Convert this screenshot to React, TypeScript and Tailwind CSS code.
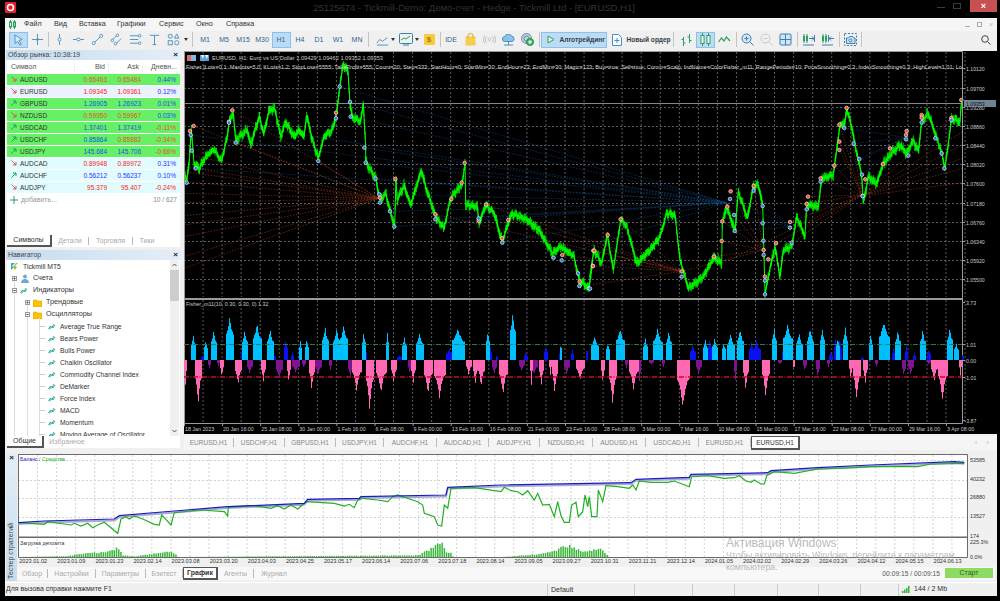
import type { ReactNode } from "react";

type Pt = [number, number];

// the zoomed crops were read at 3x, these bring their numbers back to page pixels
const L = (x: number, y: number): Pt => [184 + x / 3, 50 + y / 3];
const R = (x: number, y: number): Pt => [590 + x / 3, 50 + y / 3];
const TL = (x: number, y: number): Pt => [x / 3, 445 + y / 3];
const TR = (x: number, y: number): Pt => [500 + x / 3, 445 + y / 3];

const noise = (i: number) => {
  const v = Math.sin(i * 12.9898) * 43758.5453;
  return v - Math.floor(v);
};

const pts = (list: Pt[]) => list.map((p) => `${p[0].toFixed(1)},${p[1].toFixed(1)}`).join(" ");

const MAIN_LEFT: number[][] = [
  [0, 360], [8, 395], [15, 340], [22, 240], [30, 340], [45, 355], [65, 320], [90, 300], [112, 335], [130, 260], [135, 215],
  [148, 190], [155, 270], [190, 240], [200, 285], [225, 200], [240, 250], [255, 180], [272, 175], [290, 260], [305, 215],
  [330, 260], [345, 240], [360, 260], [368, 195], [385, 270], [403, 325], [420, 260], [445, 240], [458, 190], [467, 110],
  [478, 40], [492, 65], [498, 160], [505, 200], [530, 215], [538, 160], [545, 290], [545, 335], [575, 385], [588, 450],
  [605, 430], [620, 490], [632, 525], [636, 390], [640, 450], [660, 405], [680, 465], [712, 360], [725, 410], [755, 500],
  [780, 535], [800, 445], [835, 400], [843, 340], [845, 465], [880, 470], [885, 520], [905, 465], [930, 490], [955, 575],
  [975, 510], [985, 490], [1030, 510], [1065, 540], [1105, 610], [1130, 590], [1170, 620], [1185, 690], [1215, 715], [1225, 640],
];
const MAIN_RIGHT: number[][] = [
  [0, 680], [12, 600], [35, 640], [52, 555], [70, 660], [92, 510], [110, 530], [140, 640], [180, 600], [210, 560], [230, 490],
  [255, 495], [270, 630], [295, 715], [340, 680], [372, 620], [395, 640], [397, 520], [410, 470], [435, 540], [445, 425],
  [472, 505], [490, 410], [505, 405], [518, 465], [525, 730], [540, 655], [555, 590], [570, 680], [580, 600], [605, 590],
  [620, 500], [645, 560], [650, 465], [685, 470], [695, 385], [730, 375], [750, 225], [765, 220], [770, 175], [785, 230],
  [795, 285], [815, 375], [820, 460], [835, 380], [860, 400], [880, 340], [905, 310], [930, 285], [950, 310], [970, 270],
  [985, 305], [995, 215], [1015, 190], [1040, 265], [1055, 310], [1065, 355], [1085, 205], [1110, 215], [1115, 150],
];
const PRICE: Pt[] = [...MAIN_LEFT.map((p) => L(p[0], p[1])), ...MAIN_RIGHT.map((p) => R(p[0], p[1]))];

const candlePath = (() => {
  let d = "";
  let n = 0;
  for (let i = 1; i < PRICE.length; i++) {
    const [x0, y0] = PRICE[i - 1];
    const [x1, y1] = PRICE[i];
    const steps = Math.max(1, Math.round((x1 - x0) * 2));
    for (let s = 0; s < steps; s++) {
      const t = s / steps;
      const x = x0 + (x1 - x0) * t;
      const y = y0 + (y1 - y0) * t + (noise(n++) - 0.5) * 3.5 + Math.sin(x * 1.3) * 1.2;
      d += `M${x.toFixed(1)} ${(y - 2 - noise(n) * 2.5).toFixed(1)}V${(y + 2 + noise(n + 7) * 2.5).toFixed(1)}`;
    }
  }
  return d;
})();

const RED_MARKS: Pt[] = [
  ...[[18, 243], [29, 228], [135, 215], [145, 181], [456, 188], [588, 443], [634, 387], [754, 493], [802, 447], [833, 398], [842, 339], [906, 464], [884, 512], [954, 565], [973, 510], [1135, 615], [1187, 695], [1228, 602], [1226, 648]].map((p) => L(p[0], p[1])),
  ...[[9, 648], [13, 602], [53, 555], [92, 508], [275, 664], [372, 620], [395, 573], [397, 514], [412, 470], [422, 424], [491, 408], [521, 600], [525, 680], [535, 628], [558, 580], [600, 516], [650, 462], [654, 440], [692, 385], [733, 347], [748, 224], [748, 275], [748, 300], [770, 174], [818, 438], [826, 388], [879, 342], [900, 295], [948, 255], [950, 243], [995, 195], [995, 203], [1084, 204], [1114, 150]].map((p) => R(p[0], p[1])),
];
const BLUE_MARKS: Pt[] = [
  ...[[8, 398], [20, 255], [23, 302], [35, 355], [135, 218], [155, 278], [403, 333], [456, 205], [467, 110], [498, 156], [500, 200], [541, 293], [545, 338], [575, 386], [586, 433], [588, 458], [618, 484], [631, 530], [754, 508], [884, 505], [955, 578], [1109, 623], [1133, 631], [1182, 670], [1186, 708], [1215, 715]].map((p) => L(p[0], p[1])),
  ...[[0, 716], [275, 680], [420, 447], [432, 495], [434, 543], [491, 422], [518, 468], [518, 520], [520, 572], [521, 615], [525, 692], [525, 733], [600, 533], [605, 578], [650, 478], [692, 395], [763, 234], [791, 281], [808, 327], [816, 374], [818, 438], [948, 268], [955, 317], [995, 217], [1036, 265], [1055, 310], [1063, 355], [1084, 210]].map((p) => R(p[0], p[1])),
];

// dotted order lines, fanned out from a handful of points
const fan = (to: Pt, from: Pt[]) => from.map((f) => [f, to] as [Pt, Pt]);
const RED_LINES = [
  ...fan(L(585, 445), [310, 350, 365, 395, 430, 458, 497, 525, 560, 620, 655].map((y) => L(0, y))),
  ...fan(L(585, 445), [L(145, 181), L(29, 228), L(155, 278), L(403, 333)]),
  ...fan(R(275, 664), [L(754, 493), L(906, 464), L(973, 510), L(1135, 615), R(13, 602), R(53, 555), R(92, 508), R(9, 648), R(0, 705)]),
  ...fan(R(520, 600), [R(275, 664), R(372, 620), R(395, 573), R(397, 514), R(412, 470), R(422, 424), R(491, 408)]),
  ...fan(R(815, 435), [R(733, 347), R(748, 224), R(748, 275), R(748, 300), R(770, 174), R(692, 385), R(654, 440), R(650, 462), R(600, 516), R(558, 580), R(535, 628), R(397, 640)]),
  ...fan(R(818, 438), [R(1117, 245), R(1117, 285), R(1117, 325), R(1117, 355), R(1117, 398), R(1084, 204)]),
];
const BLUE_LINES = [
  ...fan(R(410, 458), [L(467, 110), L(498, 156), L(500, 200), L(541, 293), L(545, 338), L(575, 386), L(135, 218), L(35, 355), L(586, 433), L(631, 530), L(754, 508), L(955, 578), L(1109, 623), L(618, 484), L(884, 505), L(20, 255)]),
  ...fan(R(600, 530), [R(432, 495), R(434, 543), R(518, 468), R(491, 422), R(420, 447)]),
  ...fan(R(945, 262), [R(763, 234), R(791, 281), R(808, 327), R(816, 374), R(692, 395)]),
];

// [x0, x1, top] in crop pixels, zero line of the pane is 195 in the crop
type Spike = [number, number, number];
const FISHER_Y = (y: number) => 295 + y / 3;
const CYAN_L: Spike[] = [[20, 32, 115], [60, 68, 130], [80, 97, 103], [125, 148, 58], [175, 190, 100], [207, 230, 82], [250, 266, 98], [345, 352, 130], [362, 372, 128], [415, 432, 92], [447, 468, 97], [468, 488, 87], [535, 542, 103], [605, 612, 105], [655, 665, 122], [697, 718, 110], [803, 840, 97], [905, 915, 97], [978, 992, 45], [1128, 1131, 130]];
const BLUE_L: Spike[] = [[52, 60, 180], [170, 175, 150], [28, 34, 150], [225, 230, 150], [265, 272, 175], [300, 308, 125], [320, 328, 170], [535, 545, 150], [640, 655, 180], [785, 803, 160], [915, 922, 155], [935, 940, 175], [1020, 1030, 170], [1080, 1088, 148], [1125, 1132, 160], [1160, 1167, 160], [1205, 1210, 145], [1222, 1230, 130]];
const PINK_L: Spike[] = [[0, 5, 280], [32, 50, 335], [108, 116, 255], [152, 170, 275], [232, 243, 270], [310, 318, 275], [375, 390, 292], [505, 530, 290], [545, 568, 350], [575, 605, 295], [620, 635, 270], [680, 692, 275], [720, 745, 305], [750, 782, 312], [845, 860, 245], [868, 878, 278], [882, 900, 280], [945, 968, 305], [1038, 1045, 280], [1065, 1077, 280], [1095, 1100, 250], [1105, 1120, 305], [1175, 1200, 258]];
const PURPLE_L: Spike[] = [[72, 78, 225], [98, 105, 215], [190, 205, 238], [275, 295, 255], [325, 345, 235], [355, 362, 220], [392, 410, 240], [435, 442, 230], [492, 505, 250], [672, 680, 240], [925, 935, 240], [1005, 1020, 230], [1040, 1060, 240], [1140, 1155, 240]];
const CYAN_R: Spike[] = [[3, 25, 120], [48, 56, 140], [78, 102, 95], [158, 172, 125], [190, 215, 100], [228, 243, 105], [338, 350, 130], [365, 380, 127], [395, 405, 138], [410, 432, 115], [442, 458, 97], [545, 558, 90], [578, 605, 85], [618, 635, 110], [650, 668, 95], [690, 703, 92], [738, 748, 122], [760, 772, 90], [838, 846, 108], [868, 898, 75], [915, 930, 100], [990, 1005, 100], [1072, 1087, 92], [1093, 1103, 140]];
const BLUE_R: Spike[] = [[300, 315, 148], [350, 365, 130], [478, 492, 138], [490, 510, 135], [575, 582, 150], [718, 725, 168], [733, 738, 125], [745, 752, 125], [812, 818, 185], [905, 912, 155], [945, 952, 148], [970, 975, 172], [1012, 1020, 160], [1115, 1118, 170]];
const PINK_R: Spike[] = [[33, 43, 275], [58, 77, 335], [118, 143, 285], [260, 298, 342], [460, 475, 290], [515, 537, 308], [608, 612, 250], [778, 785, 260], [790, 810, 320], [818, 830, 272], [1023, 1040, 265], [1045, 1070, 320], [1108, 1112, 250]];
const PURPLE_R: Spike[] = [[105, 110, 222], [143, 150, 270], [178, 188, 210], [215, 222, 218], [318, 333, 238], [433, 438, 265], [565, 572, 210], [638, 648, 230], [678, 686, 250], [712, 716, 218], [855, 860, 218], [935, 945, 248], [955, 970, 240], [1010, 1020, 210]];

// one spike as a row of whole-pixel bars, with a jagged profile like the histogram
const spikeBars = (list: Spike[], ox: number, base: number) => {
  const zero = FISHER_Y(195);
  let d = "";
  for (const s of list) {
    const x0 = Math.round(ox + s[0] / 3);
    const x1 = Math.max(x0, Math.round(ox + s[1] / 3));
    const top = FISHER_Y(s[2]);
    for (let x = x0; x <= x1; x++) {
      const t = (x - x0) / Math.max(1, x1 - x0);
      const peak = 1 - Math.abs(t - 0.45) / 0.55;
      const k = (base + (1 - base) * peak * peak) * (0.92 + 0.08 * noise(x * 3));
      d += `M${x + 0.5} ${zero}V${(zero + (top - zero) * k).toFixed(1)}`;
    }
  }
  return d;
};

const BALANCE: Pt[] = [
  ...[[52, 233], [130, 228], [340, 222], [355, 212], [520, 198], [680, 185], [910, 175], [920, 163], [1075, 160], [1080, 155], [1335, 150], [1340, 127], [1500, 120]].map((p) => TL(p[0], p[1])),
  ...[[0, 120], [390, 113], [405, 103], [565, 97], [570, 88], [800, 83], [810, 77], [950, 68], [1110, 60], [1360, 50], [1390, 52]].map((p) => TR(p[0], p[1])),
];
const EQUITY: Pt[] = [
  ...[[52, 233], [130, 238], [140, 230], [210, 240], [220, 235], [240, 243], [260, 235], [275, 248], [290, 240], [310, 232], [350, 265], [360, 222], [375, 215], [385, 222], [400, 213], [425, 222], [460, 238], [475, 240], [482, 210], [490, 218], [510, 240], [520, 203], [600, 195], [670, 200], [680, 213], [682, 187], [760, 182], [810, 190], [830, 182], [850, 192], [870, 180], [890, 192], [915, 170], [1000, 175], [1030, 183], [1045, 178], [1060, 188], [1070, 165], [1085, 160], [1130, 165], [1160, 170], [1175, 155], [1190, 150], [1250, 170], [1265, 180], [1270, 205], [1300, 215], [1310, 240], [1322, 243], [1330, 180], [1340, 190], [1350, 130], [1420, 128], [1500, 140]].map((p) => TL(p[0], p[1])),
  ...[[0, 140], [10, 127], [30, 137], [50, 140], [65, 150], [80, 137], [100, 165], [110, 145], [125, 180], [145, 178], [160, 215], [170, 170], [180, 212], [190, 232], [205, 232], [212, 180], [225, 172], [232, 215], [245, 200], [252, 150], [260, 185], [265, 155], [272, 215], [288, 215], [292, 135], [305, 170], [315, 122], [350, 125], [385, 130], [395, 120], [405, 135], [415, 108], [450, 112], [500, 112], [520, 108], [565, 125], [572, 95], [620, 92], [670, 100], [700, 98], [715, 92], [735, 108], [750, 112], [760, 105], [780, 117], [790, 117], [797, 92], [820, 80], [880, 85], [950, 72], [1060, 68], [1110, 65], [1250, 65], [1290, 57], [1390, 55]].map((p) => TR(p[0], p[1])),
];

const LOAD_ENV: Pt[] = [
  ...[[50, 336], [200, 333], [230, 326], [280, 322], [320, 317], [355, 303], [360, 330], [400, 334], [450, 325], [510, 316], [525, 330], [530, 336], [1000, 332], [1250, 330], [1270, 318], [1290, 305], [1305, 287], [1322, 286], [1330, 318], [1350, 322], [1355, 336], [1500, 336]].map((p) => TL(p[0], p[1])),
  ...[[0, 336], [100, 327], [150, 318], [190, 298], [205, 298], [240, 315], [300, 310], [315, 325], [320, 336], [1390, 336]].map((p) => TR(p[0], p[1])),
];
const loadBars = (() => {
  const out: { x: number; y: number }[] = [];
  for (let x = 18; x < 963; x += 2.2) {
    const k = LOAD_ENV.findIndex((p) => p[0] > x);
    if (k < 1) continue;
    const a = LOAD_ENV[k - 1];
    const b = LOAD_ENV[k];
    const y = a[1] + ((b[1] - a[1]) * (x - a[0])) / (b[0] - a[0]);
    out.push({ x, y: y + noise(x) * (557 - y) * 0.3 });
  }
  return out;
})();

const PRICE_LABELS: [string, number][] = [
  ["1.10120", 68], ["1.09700", 88], ["1.09280", 107], ["1.08860", 126], ["1.08440", 145], ["1.08020", 164],
  ["1.07600", 183], ["1.07180", 203], ["1.06760", 222], ["1.06340", 241], ["1.05920", 260], ["1.05500", 279],
];
const TIME_LABELS = ["18 Jan 2023", "20 Jan 16:00", "25 Jan 08:00", "30 Jan 00:00", "1 Feb 16:00", "6 Feb 08:00", "9 Feb 00:00", "13 Feb 16:00", "16 Feb 08:00", "21 Feb 00:00", "23 Feb 16:00", "28 Feb 08:00", "3 Mar 00:00", "7 Mar 16:00", "10 Mar 08:00", "15 Mar 00:00", "17 Mar 16:00", "22 Mar 08:00", "27 Mar 00:00", "29 Mar 16:00", "3 Apr 08:00"];
const TEST_DATES = ["2023.01.02", "2023.01.09", "2023.01.23", "2023.02.14", "2023.03.08", "2023.03.20", "2023.04.03", "2023.04.25", "2023.05.17", "2023.06.14", "2023.07.06", "2023.07.18", "2023.08.14", "2023.09.05", "2023.09.27", "2023.10.31", "2023.11.21", "2023.12.14", "2024.01.05", "2024.02.02", "2024.02.29", "2024.03.26", "2024.04.12", "2024.05.15", "2024.06.13"];

const FISHER_PARAMS = "Fisher [Lots=0.1; Maxlots=5.0; KLots=1.2; StopLoss=5555; TakeProfit=555; Count=20; Step=333; StartHour=0; StartMin=30; EndHour=23; EndMin=30; Magic=123; Buy=true; Sell=true; Comm=Scalp; IndName=ColorFisher_m11; RangePeriods=10; PriceSmoothing=0.3; IndexSmoothing=0.3; HighLevel=1.01; Lo";

const SYMBOLS = [
  { name: "AUDUSD", up: false, bid: "0.65463", ask: "0.65484", day: "0.44%", row: "bg-[#66f066]", bc: "text-[#e8501c]", ac: "text-[#e8501c]", dc: "text-[#1c50e8]" },
  { name: "EURUSD", up: false, bid: "1.09345", ask: "1.09361", day: "0.12%", row: "bg-[#eaf1ff]", bc: "text-[#ff2020]", ac: "text-[#ff2020]", dc: "text-[#3030ff]" },
  { name: "GBPUSD", up: true, bid: "1.26905", ask: "1.26923", day: "0.01%", row: "bg-[#66f066]", bc: "text-[#1c50e8]", ac: "text-[#1c50e8]", dc: "text-[#1c50e8]" },
  { name: "NZDUSD", up: false, bid: "0.59950", ask: "0.59967", day: "0.03%", row: "bg-[#66f066]", bc: "text-[#e8501c]", ac: "text-[#e8501c]", dc: "text-[#1c50e8]" },
  { name: "USDCAD", up: true, bid: "1.37401", ask: "1.37419", day: "-0.11%", row: "bg-[#66f066]", bc: "text-[#1c50e8]", ac: "text-[#1c50e8]", dc: "text-[#e8501c]" },
  { name: "USDCHF", up: true, bid: "0.85864", ask: "0.85882", day: "-0.34%", row: "bg-[#66f066]", bc: "text-[#1c50e8]", ac: "text-[#e8501c]", dc: "text-[#e8501c]" },
  { name: "USDJPY", up: true, bid: "145.684", ask: "145.706", day: "-0.68%", row: "bg-[#66f066]", bc: "text-[#1c50e8]", ac: "text-[#1c50e8]", dc: "text-[#e8501c]" },
  { name: "AUDCAD", up: false, bid: "0.89948", ask: "0.89972", day: "0.31%", row: "bg-[#e0fcff]", bc: "text-[#ff2020]", ac: "text-[#ff2020]", dc: "text-[#3030ff]" },
  { name: "AUDCHF", up: true, bid: "0.56212", ask: "0.56237", day: "0.10%", row: "bg-[#e0fcff]", bc: "text-[#3030ff]", ac: "text-[#3030ff]", dc: "text-[#3030ff]" },
  { name: "AUDJPY", up: false, bid: "95.379", ask: "95.407", day: "-0.24%", row: "bg-[#e0fcff]", bc: "text-[#ff2020]", ac: "text-[#ff2020]", dc: "text-[#ff2020]" },
];

const INDICATORS = ["Average True Range", "Bears Power", "Bulls Power", "Chaikin Oscillator", "Commodity Channel Index", "DeMarker", "Force Index", "MACD", "Momentum", "Moving Average of Oscillator"];

const CHART_TABS: [string, string][] = [
  ["EURUSD,H1", "w-[50px]"], ["USDCHF,H1", "w-[51px]"], ["GBPUSD,H1", "w-[51px]"], ["USDJPY,H1", "w-[48px]"],
  ["AUDCHF,H1", "w-[53px]"], ["AUDCAD,H1", "w-[52px]"], ["AUDJPY,H1", "w-[51px]"], ["NZDUSD,H1", "w-[53px]"],
  ["AUDUSD,H1", "w-[53px]"], ["USDCAD,H1", "w-[53px]"], ["EURUSD,H1", "w-[52px]"],
];

const TESTER_TABS: [string, string][] = [
  ["Обзор", "w-[31px]"], ["Настройки", "w-[48px]"], ["Параметры", "w-[50px]"], ["Бэктест", "w-[37px]"],
];

const STATUS_WIDTHS = ["w-[58px]", "w-[42px]", "w-[43px]", "w-[41px]", "w-[42px]", "w-[38px]"];

function Ico({ children, w = 13 }: { children: ReactNode; w?: number }) {
  return (
    <svg width={w} height={w} viewBox="0 0 14 14" fill="none" strokeWidth="1" className="text-[#4a90c0] stroke-current">
      {children}
    </svg>
  );
}

function Cell({ children, active = false }: { children: ReactNode; active?: boolean }) {
  return (
    <div className={`w-[19px] h-[16px] shrink-0 flex items-center justify-center text-[#33658a] text-[7px] ${active ? "bg-[#bcdcf5] border border-[#8dc0ea]" : ""}`}>
      {children}
    </div>
  );
}

const Sep = () => (
  <div className="w-[3px] h-[15px] shrink-0 flex justify-center">
    <div className="w-px h-full bg-[#c4c4c4]" />
  </div>
);

const Caret = () => <div className="w-0 h-0 border-x-[2.5px] border-x-transparent border-t-[3px] border-t-[#333] mx-[1px]" />;

function Toolbar() {
  return (
    <div className="h-[18px] flex items-center pl-[3.5px] relative">
      <Cell active>
        <Ico><path d="M3 2l8 5-3.5 1 2.5 4-1.5 1-2.5-4-2.5 2.5z" fill="#d8ecfb" /></Ico>
      </Cell>
      <Cell>
        <Ico><path d="M7 1v12M1 7h12" /><circle cx="7" cy="7" r="1" fill="currentColor" /></Ico>
      </Cell>
      <Sep />
      <Cell>
        <Ico><path d="M7 1v12" /><ellipse cx="7" cy="7" rx="1.5" ry="2" fill="#fff" /></Ico>
      </Cell>
      <Cell>
        <Ico><path d="M1 7h12" /><ellipse cx="7" cy="7" rx="2" ry="1.5" fill="#fff" /></Ico>
      </Cell>
      <Cell>
        <Ico><path d="M3 11L11 3" /><circle cx="3" cy="11" r="1.6" fill="#fff" /><circle cx="11" cy="3" r="1.6" fill="#fff" /></Ico>
      </Cell>
      <Cell>
        <Ico><path d="M2 8L8 2M6 12l6-6" /><circle cx="2.5" cy="8" r="1.4" fill="#fff" /><circle cx="8" cy="2.5" r="1.4" fill="#fff" /><circle cx="6" cy="11.5" r="1.4" fill="#fff" /></Ico>
      </Cell>
      <Cell>
        <Ico><path d="M1 3h9M1 7h9M1 11h9" /><circle cx="11.5" cy="3" r="1.4" fill="#fff" /><circle cx="11.5" cy="11" r="1.4" fill="#fff" /></Ico>
      </Cell>
      <Cell>
        <Ico><path d="M2 2.5h10M7 2.5V12.5M5 12.5h4" /></Ico>
      </Cell>
      <Cell>
        <Ico><circle cx="3.5" cy="3.5" r="2.2" /><path d="M10.5 1l2.4 4.5H8z" /><rect x="1.3" y="8.3" width="4.4" height="4.4" /><rect x="8.3" y="8.3" width="4.4" height="4.4" rx="2" /></Ico>
      </Cell>
      <div className="w-[6px] flex justify-center"><Caret /></div>
      <div className="w-[2px]" />
      <Sep />
      <div className="w-[2px]" />
      {["M1", "M5", "M15", "M30", "H1", "H4", "D1", "W1", "MN"].map((tf) => (
        <Cell key={tf} active={tf === "H1"}>{tf}</Cell>
      ))}
      <Sep />
      <div className="w-[3px]" />
      <Cell>
        <Ico><path d="M1 11l3-4 3 2 5-4M1 13h12" /></Ico>
      </Cell>
      <div className="w-[4px] flex justify-center -ml-[1px]"><Caret /></div>
      <div className="w-[2px]" />
      <Cell>
        <svg width="14" height="13" viewBox="0 0 14 13" fill="none">
          <rect x="0.5" y="0.5" width="13" height="10" rx="1" fill="#e8f4ec" stroke="#3f7fb0" />
          <path d="M2 7l3-2 2 1 4-3" stroke="#38a05c" />
          <path d="M4 12h6" stroke="#3f7fb0" />
        </svg>
      </Cell>
      <div className="w-[4px] flex justify-center -ml-[1px]"><Caret /></div>
      <div className="w-[1px]" />
      <Cell>
        <div className="w-[11px] h-[11px] bg-[#f8ca3c] rounded-[1px] flex items-center justify-center text-[8px] font-bold text-[#a87808]">$</div>
      </Cell>
      <Sep />
      <Cell>IDE</Cell>
      <Cell>
        <svg width="11" height="13" viewBox="0 0 11 13" fill="none">
          <rect x="0.5" y="3.5" width="10" height="9" fill="#f5cf4c" />
          <path d="M3 5V2.5a2.5 2 0 0 1 5 0V5" stroke="#d8a820" />
        </svg>
      </Cell>
      <Cell>
        <svg width="13" height="9" viewBox="0 0 13 9" fill="none" stroke="#c0c0c0">
          <circle cx="6.5" cy="4.5" r="1.2" />
          <path d="M3.5 1.5a4.5 4.5 0 0 0 0 6M9.5 1.5a4.5 4.5 0 0 1 0 6M1.5 0.5a7 7 0 0 0 0 8M11.5 0.5a7 7 0 0 1 0 8" />
        </svg>
      </Cell>
      <Cell>
        <svg width="13" height="12" viewBox="0 0 13 12" fill="none">
          <path d="M3 7.5a2.5 2.5 0 0 1 0-5 3.5 3.5 0 0 1 6.5-.5 2.8 2.8 0 0 1 .5 5.5z" fill="#8cc4e8" stroke="#4a90c0" />
          <path d="M6.5 7.5V11M2 11h9" stroke="#4a90c0" />
        </svg>
      </Cell>
      <Cell>
        <svg width="13" height="13" viewBox="0 0 13 13" fill="none">
          <circle cx="5.5" cy="5.5" r="5" fill="#b8d0e0" stroke="#7090a8" />
          <circle cx="5.5" cy="5.5" r="2.5" stroke="#7090a8" />
          <circle cx="9" cy="9" r="3.5" fill="#3fb868" stroke="#2a8a4a" />
          <path d="M9 7v4M7 9h4" stroke="#fff" />
        </svg>
      </Cell>
      <div className="w-[1px]" />
      <Sep />
      <div className="w-[66px] h-[16px] bg-[#bcdcf5] border border-[#8dc0ea] flex items-center shrink-0 pl-[5px] gap-[5px] text-[6.6px] font-bold text-[#33414c] whitespace-nowrap">
        <svg width="8" height="9" viewBox="0 0 8 9" fill="none" className="shrink-0"><path d="M1 1l6 3.5L1 8z" stroke="#2aa060" fill="#e0f5e8" /></svg>
        Алготрейдинг
      </div>
      <div className="w-[64px] h-[16px] flex items-center shrink-0 pl-[4px] gap-[5px] text-[6.6px] font-bold text-[#33414c] ml-[1px] whitespace-nowrap">
        <svg width="10" height="12" viewBox="0 0 10 12" fill="none" stroke="#4a90c0" className="shrink-0">
          <path d="M.5.5h6l3 3v8h-9z" fill="#f8fbff" />
          <path d="M5 4v5M2.5 6.5h5" />
        </svg>
        Новый ордер
      </div>
      <Sep />
      <div className="w-[2px]" />
      <Cell>
        <svg width="13" height="12" viewBox="0 0 13 12" fill="none" stroke="#2aa060">
          <path d="M3.5 3v9M1.5 5.5h2M3.5 9h2M9.5 0v9M7.5 3h2M9.5 6.5h2" />
        </svg>
      </Cell>
      <Cell active>
        <svg width="13" height="13" viewBox="0 0 13 13" fill="none" stroke="#2aa060">
          <path d="M3.5 0v13M9.5 0v13" />
          <rect x="2" y="2.5" width="3" height="8" fill="#fff" />
          <rect x="8" y="2.5" width="3" height="8" fill="#fff" />
        </svg>
      </Cell>
      <Cell>
        <svg width="13" height="9" viewBox="0 0 13 9" fill="none" stroke="#2aa060" strokeWidth="1.2">
          <path d="M0.5 7l3-4 2.5 3 2.5-4 3.5 4" />
        </svg>
      </Cell>
      <div className="w-[1px]" />
      <Sep />
      <Cell>
        <svg width="13" height="13" viewBox="0 0 13 13" fill="none" stroke="#3f7fb0">
          <circle cx="5.5" cy="5.5" r="4.5" fill="#cfe6f8" />
          <path d="M8.5 8.5l4 4M3.5 5.5h4M5.5 3.5v4" />
        </svg>
      </Cell>
      <Cell>
        <svg width="13" height="13" viewBox="0 0 13 13" fill="none" stroke="#c8c8c8">
          <circle cx="5.5" cy="5.5" r="4.5" />
          <path d="M8.5 8.5l4 4M3.5 5.5h4" />
        </svg>
      </Cell>
      <Cell>
        <svg width="13" height="13" viewBox="0 0 13 13" fill="none" stroke="#3f7fb0">
          <rect x="1" y="1" width="11" height="11" rx="1" fill="#cfe6f8" />
          <path d="M6.5 1v11M1 6.5h11" />
        </svg>
      </Cell>
      <div className="w-[1px]" />
      <Sep />
      <Cell>
        <svg width="13" height="12" viewBox="0 0 13 12" fill="none">
          <path d="M2 0v9M5 0v9" stroke="#2aa060" />
          <rect x="1" y="2" width="2" height="5" fill="#2aa060" />
          <rect x="4" y="2" width="2" height="5" fill="#2aa060" />
          <path d="M7 4.5h5M10 2.5l2 2-2 2M12.5 1v7M1 11h11" stroke="#3f7fb0" />
        </svg>
      </Cell>
      <Cell>
        <svg width="13" height="12" viewBox="0 0 13 12" fill="none">
          <path d="M2 0v9M5 0v9" stroke="#2aa060" />
          <rect x="1" y="2" width="2" height="5" fill="#2aa060" />
          <rect x="4" y="2" width="2" height="5" fill="#2aa060" />
          <path d="M8 4.5h5M10 2.5l-2 2 2 2M7.5 1v7M1 11h11" stroke="#3f7fb0" />
        </svg>
      </Cell>
      <div className="w-[1px]" />
      <Sep />
      <Cell>
        <svg width="13" height="13" viewBox="0 0 13 13" fill="none" stroke="#3f7fb0">
          <rect x="0.5" y="0.5" width="12" height="12" strokeDasharray="2 1.5" />
          <path d="M2.5 5h2l1-1.5h3l1 1.5h1.5v5.5h-8.5z" fill="#cfe6f8" />
          <circle cx="6.5" cy="7.5" r="1.5" />
        </svg>
      </Cell>
      <Sep />
      <div className="ml-auto mr-[6px] flex">
        <svg width="10" height="10" viewBox="0 0 10 10" fill="none" stroke="#444">
          <circle cx="4" cy="4" r="3.3" />
          <path d="M6.5 6.5L9.5 9.5" />
        </svg>
      </div>
    </div>
  );
}

function PanelHead({ title }: { title: string }) {
  return (
    <div className="h-[10px] mx-[1px] bg-gradient-to-r from-[#c6dcee] to-[#e4eef8] flex items-center justify-between pl-[2px] pr-[3px] text-[6.9px] text-[#444] shrink-0">
      <span>{title}</span>
      <span className="font-bold leading-none text-[#222] text-[8px]">×</span>
    </div>
  );
}

function MarketWatch() {
  return (
    <div className="h-[198px] flex flex-col pt-[1px]">
      <PanelHead title="Обзор рынка: 10:38:19" />
      <div className="mx-[2px] flex-1 bg-white flex flex-col">
        <div className="h-[13px] grid grid-cols-[68px_34px_34px_36px] items-center text-[#555] mt-[1px] text-[7px]">
          <span className="pl-[4px] border-r border-[#eee]">Символ</span>
          <span className="text-right pr-[3px] border-r border-[#eee]">Bid</span>
          <span className="text-right pr-[3px] border-r border-[#eee]">Ask</span>
          <span className="text-right pr-[2px] whitespace-nowrap overflow-hidden">Дневн...</span>
        </div>
        {SYMBOLS.map((s) => (
          <div key={s.name} className={`h-[12px] grid grid-cols-[68px_34px_34px_36px] items-center border-b border-white text-[6.5px] ${s.row}`}>
            <div className="flex items-center pl-[4px] gap-[3px] text-[#333]">
              <svg width="6" height="6" viewBox="0 0 6 6" fill="none" stroke={s.up ? "#1f9e5a" : "#e05050"}>
                {s.up ? <path d="M0.5 5.5L5 1M2 1h3v3" /> : <path d="M0.5 0.5L5 5M2 5h3V2" />}
              </svg>
              {s.name}
            </div>
            <span className={`text-right pr-[2px] ${s.bc}`}>{s.bid}</span>
            <span className={`text-right pr-[2px] ${s.ac}`}>{s.ask}</span>
            <span className={`text-right pr-[3px] ${s.dc}`}>{s.day}</span>
          </div>
        ))}
        <div className="h-[12px] flex items-center justify-between text-[7px] text-[#999] pl-[3px] pr-[3px]">
          <span className="flex items-center gap-[3px]">
            <svg width="8" height="8" viewBox="0 0 8 8" stroke="#2aa060"><path d="M4 0v8M0 4h8" /></svg>
            добавить...
          </span>
          <span className="text-[#888] text-[6.6px]">10 / 627</span>
        </div>
      </div>
      <div className="h-[12px] flex items-stretch text-[7px] text-[#aaa] mx-[2px] mt-auto shrink-0 bg-white">
        <div className="w-[45px] bg-white text-[#333] border-r-2 border-b-2 border-[#555] text-center leading-[10px]">Символы</div>
        <div className="w-[36px] text-center leading-[11px]">Детали</div>
        <div className="w-px h-[8px] bg-[#bbb] mt-[2px]" />
        <div className="w-[43px] text-center leading-[11px]">Торговля</div>
        <div className="w-px h-[8px] bg-[#bbb] mt-[2px]" />
        <div className="w-[28px] text-center leading-[11px]">Тики</div>
      </div>
    </div>
  );
}

const Pict = () => (
  <svg width="8" height="7" viewBox="0 0 8 7" fill="none" stroke="#35a0d0" className="shrink-0">
    <path d="M0.5 6l2-3 1.5 1.5L6 1" />
    <path d="M1.5 6.5l2-3 1.5 1.5 2-3" stroke="#3bbb6a" />
  </svg>
);

const Box = ({ minus = false }: { minus?: boolean }) => (
  <svg width="5" height="5" viewBox="0 0 5 5" className="shrink-0 relative" fill="#fff" stroke="#999">
    <rect x="0.5" y="0.5" width="4" height="4" />
    <path d={minus ? "M1.5 2.5h2" : "M1.5 2.5h2M2.5 1.5v2"} stroke="#444" />
  </svg>
);

const Folder = () => (
  <svg width="9" height="8" viewBox="0 0 9 8" className="shrink-0">
    <path d="M0 1h3.5l1 1H9v6H0z" fill="#fcc400" stroke="#d09a00" strokeWidth="0.5" />
  </svg>
);

function Navigator() {
  return (
    <div className="h-[199px] flex flex-col pt-[1px]">
      <PanelHead title="Навигатор" />
      <div className="mx-[2px] flex-1 bg-white flex min-h-0 text-[7.2px] text-[#333] overflow-hidden">
        <div className="w-[163px] overflow-hidden pt-[1px] relative">
          <div className="absolute left-[7px] top-[20px] bottom-0 w-px bg-[#ddd]" />
          <div className="absolute left-[20px] top-[44px] bottom-0 w-px bg-[#ddd]" />
          <div className="absolute left-[32px] top-[58px] bottom-0 w-px bg-[#ddd]" />
          <div className="h-[12px] flex items-center gap-[2px] pl-[3px]">
            <svg width="9" height="9" viewBox="0 0 9 9">
              <path d="M1 1h4l-3 3 2 1-3 3z" fill="#38a8e0" />
              <path d="M3 5l3-4h2L5 4l2 1-2 3z" fill="#9cc820" />
            </svg>
            <span className="ml-[2px] text-[6.8px]">Tickmill MT5</span>
          </div>
          <div className="h-[12px] flex items-center pl-[5px] gap-[3px]">
            <Box />
            <svg width="9" height="9" viewBox="0 0 9 9" fill="#6ca8d8"><circle cx="5" cy="2.5" r="2" /><path d="M1 9c0-3 2-4 4-4s4 1 4 4z" /></svg>
            <span className="ml-[1px]">Счета</span>
          </div>
          <div className="h-[12px] flex items-center pl-[5px] gap-[3px]">
            <Box minus />
            <Pict />
            <span className="ml-[2px]">Индикаторы</span>
          </div>
          <div className="h-[12px] flex items-center pl-[18px] gap-[3px]">
            <Box />
            <Folder />
            <span className="ml-[1px]">Трендовые</span>
          </div>
          <div className="h-[12px] flex items-center pl-[18px] gap-[3px]">
            <Box minus />
            <Folder />
            <span className="ml-[1px]">Осцилляторы</span>
          </div>
          {INDICATORS.map((n) => (
            <div key={n} className="h-[12px] flex items-center pl-[32px] gap-[3px] whitespace-nowrap text-[6.7px]">
              <div className="w-[6px] h-px bg-[#ccc] shrink-0" />
              <Pict />
              <span className="ml-[1px]">{n}</span>
            </div>
          ))}
        </div>
        <div className="w-[9px] bg-[#f0f0f0] flex flex-col items-center shrink-0">
          <svg width="5" height="10" viewBox="0 0 5 10" fill="none" stroke="#555"><path d="M0.5 6l2-2 2 2" /></svg>
          <div className="w-full h-[31px] bg-[#cdcdcd]" />
          <svg width="5" height="10" viewBox="0 0 5 10" fill="none" stroke="#555" className="mt-auto"><path d="M0.5 4l2 2 2-2" /></svg>
        </div>
      </div>
      <div className="h-[12px] flex items-stretch text-[7px] text-[#aaa] mx-[2px] shrink-0 bg-white">
        <div className="w-[37px] bg-white text-[#333] border-r-2 border-b-2 border-[#555] text-center leading-[10px]">Общие</div>
        <div className="w-[46px] text-center leading-[11px]">Избранное</div>
      </div>
    </div>
  );
}

function MainChart() {
  const vgrid = Array.from({ length: 41 }, (_, i) => 184 + 19.05 * (i + 1));
  return (
    <svg width="813" height="383" viewBox="184 51 813 383" className="block bg-black" fontFamily="'Liberation Sans', sans-serif">
      {vgrid.map((x) => (
        <g key={x} stroke="#5c5c5c" strokeDasharray="2 2">
          <path d={`M${x} 52V297`} />
          <path d={`M${x} 300V423`} />
        </g>
      ))}
      {PRICE_LABELS.map(([, y]) => (
        <path key={y} d={`M184 ${y}.5H962`} stroke="#5c5c5c" strokeDasharray="2 2" />
      ))}
      <g strokeDasharray="1.5 1.5" fill="none" strokeWidth="0.7">
        {RED_LINES.map(([a, b], i) => (
          <line key={i} x1={a[0]} y1={a[1]} x2={b[0]} y2={b[1]} stroke="#8a3216" />
        ))}
        {BLUE_LINES.map(([a, b], i) => (
          <line key={i} x1={a[0]} y1={a[1]} x2={b[0]} y2={b[1]} stroke="#103f6e" />
        ))}
      </g>
      <path d="M184 103.5H962" stroke="#7d8894" />
      <polyline points={pts(PRICE)} stroke="#00ff00" strokeWidth="1" fill="none" />
      <path d={candlePath} stroke="#00ff00" strokeWidth="0.8" fill="none" />
      {RED_MARKS.map((p, i) => (
        <circle key={i} cx={p[0]} cy={p[1]} r="1.8" fill="#f05030" stroke="#f4e8e0" strokeWidth="0.7" />
      ))}
      {BLUE_MARKS.map((p, i) => (
        <circle key={i} cx={p[0]} cy={p[1]} r="1.8" fill="#2a78d0" stroke="#dce8f4" strokeWidth="0.7" />
      ))}
      <rect x="187" y="55" width="9" height="6" fill="#e06868" />
      <rect x="191" y="55" width="5" height="6" fill="#80b8e8" />
      <rect x="200" y="55" width="9" height="6" fill="#5aa0d8" />
      <path d="M201 55h3l-1 4zM205 55h3l-1 4z" fill="#fff" />
      <text x="212" y="60" fontSize="5.4" fill="#c8c8c8" textLength="171" lengthAdjust="spacingAndGlyphs">EURUSD, H1:  Euro vs US Dollar   1.09429 1.09462 1.09352 1.09353</text>
      <text x="186" y="68.5" fontSize="5.4" fill="#d4d4d4" textLength="776" lengthAdjust="spacingAndGlyphs">{FISHER_PARAMS}</text>

      <path d="M184 51.5H962.5V423.5H184.5V51" stroke="#9a9a9a" fill="none" />
      <rect x="184" y="298" width="779" height="2" fill="#9a9a9a" />
      {PRICE_LABELS.map(([l, y]) => (
        <g key={l}>
          <path d={`M962 ${y}.5h3`} stroke="#9a9a9a" />
          <text x="966" y={y + 2.5} fontSize="5.2" fill="#c8c8c8">{l}</text>
        </g>
      ))}
      <rect x="964" y="100" width="32" height="7" fill="#6f8494" />
      <text x="966" y="105.5" fontSize="5.2" fill="#101418">1.09353</text>

      {/* fisher pane */}
      <path d={spikeBars(PURPLE_L, 184, 0.5) + spikeBars(PURPLE_R, 590, 0.5)} stroke="#7d1590" />
      <path d={spikeBars(PINK_L, 184, 0.4) + spikeBars(PINK_R, 590, 0.4)} stroke="#ff69b4" />
      <path d={spikeBars(BLUE_L, 184, 0.55) + spikeBars(BLUE_R, 590, 0.55)} stroke="#0a10f0" />
      <path d={spikeBars(CYAN_L, 184, 0.6) + spikeBars(CYAN_R, 590, 0.6)} stroke="#00bfff" />
      <path d="M184 344.5H962" stroke="#2e7d40" strokeDasharray="5 1.5 1 1.5" />
      <path d="M184 377H962" stroke="#c01030" strokeWidth="1.3" strokeDasharray="5 1.5 1 1.5" />
      <text x="186" y="306" fontSize="5.4" fill="#c8c8c8">Fisher_m11(10, 0.30, 0.30, 0) 1.32</text>
      {([["3.73", 302], ["1.01", 344], ["0.00", 360], ["-1.01", 377], ["-3.87", 420]] as [string, number][]).map(([l, y]) => (
        <g key={l}>
          <path d={`M962 ${y}.5h3`} stroke="#9a9a9a" />
          <text x={l.startsWith("-") ? 964.5 : 966} y={y + 2.5} fontSize="5.2" fill="#c8c8c8">{l}</text>
        </g>
      ))}
      {TIME_LABELS.map((t, i) => (
        <g key={t}>
          <path d={`M${184.5 + i * 38.1} 423v3`} stroke="#9a9a9a" />
          <text x={185 + i * 38.1} y="430.5" fontSize="5.3" fill="#c8c8c8">{t}</text>
        </g>
      ))}
    </svg>
  );
}

function TesterChart() {
  const vgrid = Array.from({ length: 49 }, (_, i) => 17.5 + 19.05 * (i + 1));
  const hs = [460.5, 480.5, 498.5, 517.5];
  const axis: [string, number][] = [["53585", 462], ["40232", 481], ["26880", 499], ["13527", 518], ["174", 537.5]];
  const strip: Pt[] = BALANCE.map((p) => [p[0], p[1] + 1.4]);
  return (
    <svg width="981" height="114" viewBox="16 453 981 114" className="block shrink-0" fontFamily="'Liberation Sans', sans-serif">
      <rect x="17" y="454" width="949" height="103" fill="#fff" />
      {vgrid.map((x) => (
        <g key={x} stroke="#d4d4d4" strokeDasharray="2 2">
          <path d={`M${x} 455V536`} />
          <path d={`M${x} 539V557`} />
        </g>
      ))}
      {hs.map((y) => (
        <path key={y} d={`M17 ${y}H966`} stroke="#d4d4d4" strokeDasharray="2 2" />
      ))}
      <path d="M17 454.5H966.5V557.5H17.5V454" stroke="#6a6a6a" fill="none" />
      <rect x="17" y="536.5" width="950" height="1.5" fill="#6a6a6a" />
      <polyline points={pts(strip)} fill="none" stroke="#a8acd4" strokeWidth="2" />
      <polyline points={pts(EQUITY)} fill="none" stroke="#22b022" strokeWidth="1.2" />
      <polyline points={pts(BALANCE)} fill="none" stroke="#1a1ac0" strokeWidth="1.2" />
      <text x="19" y="461" fontSize="5.2" fill="#2a2ad0">Баланс <tspan fill="#555">/</tspan> <tspan fill="#22b022">Средства</tspan></text>
      {loadBars.map((b) => (
        <rect key={b.x} x={b.x} y={b.y} width="1.5" height={557 - b.y} fill="#38b838" />
      ))}
      <text x="19" y="545" fontSize="5.2" fill="#333">Загрузка депозита</text>
      {axis.map(([l, y]) => (
        <text key={l} x="969" y={y} fontSize="5.4" fill="#333">{l}</text>
      ))}
      <text x="969" y="544" fontSize="5.4" fill="#333">225.3%</text>
      <text x="969" y="559" fontSize="5.4" fill="#333">0.0%</text>
      {TEST_DATES.map((d, i) => (
        <text key={d} x={18.2 + i * 38.1} y="563" fontSize="5.6" fill="#333">{d}</text>
      ))}
    </svg>
  );
}

function Tester() {
  return (
    <div className="h-[129px] flex mt-[2px] relative">
      <div className="w-[11px] ml-[1px] bg-gradient-to-b from-[#e4eef8] to-[#c6dcee] flex flex-col items-center justify-between shrink-0 pb-[2px]">
        <span className="text-[8px] font-bold leading-[10px] text-[#222]">×</span>
        <span className="[writing-mode:vertical-rl] rotate-180 text-[7px] text-[#444] whitespace-nowrap">Тестер стратегий</span>
      </div>
      <div className="flex-1 flex flex-col min-w-0">
        <TesterChart />
        <div className="h-[13px] flex items-stretch text-[7px] text-[#aaa] bg-[#f8f8f8] mr-[2px]">
          {TESTER_TABS.map(([t, w]) => (
            <div key={t} className={`${w} text-center border-r border-[#bbb] my-[2px] leading-[9px] shrink-0`}>{t}</div>
          ))}
          <div className="w-[35px] bg-white text-[#333] font-bold border border-[#555] border-b-2 border-r-2 text-center leading-[10px] shrink-0">График</div>
          <div className="w-[36px] text-center border-r border-[#bbb] my-[2px] leading-[9px] shrink-0">Агенты</div>
          <div className="w-[40px] text-center my-[2px] leading-[9px] shrink-0">Журнал</div>
          <div className="ml-auto text-[#555] leading-[13px] mr-[5px] text-[6.7px]">00:09:15 / 00:09:15</div>
          <div className="w-[48px] h-[10px] bg-[#8cdc64] text-[#2a5a20] text-center leading-[10px] mt-[1px] mr-[2px]">Старт</div>
        </div>
      </div>
      <div className="absolute left-[721px] top-[84px] text-[#a8a8a8]/80 pointer-events-none whitespace-nowrap">
        <div className="text-[12px] leading-[12px]">Активация Windows</div>
        <div className="text-[8.8px] leading-[12px]">Чтобы активировать Windows, перейдите к параметрам</div>
        <div className="text-[8.8px] leading-[12px]">компьютера.</div>
      </div>
    </div>
  );
}

function StatusBar() {
  return (
    <div className="h-[14px] mt-[1px] flex items-center text-[7px] text-[#333] bg-[#f0f0f0] border-t border-[#fff]">
      <div className="w-[542px] pl-[1px] shrink-0">Для вызова справки нажмите F1</div>
      <div className="w-[87px] border-l border-[#ccc] pl-[3px] shrink-0 h-[12px] leading-[12px]">Default</div>
      {STATUS_WIDTHS.map((w, i) => (
        <div key={i} className={`${w} border-l border-[#ccc] shrink-0 h-[12px]`} />
      ))}
      <div className="flex-1 border-l border-[#ccc] h-[12px] flex items-center pl-[3px] gap-[4px]">
        <svg width="8" height="7" viewBox="0 0 8 7" fill="#3bb040">
          <rect x="0" y="5" width="1.5" height="2" />
          <rect x="2" y="3.5" width="1.5" height="3.5" />
          <rect x="4" y="2" width="1.5" height="5" />
          <rect x="6" y="0" width="1.5" height="7" />
        </svg>
        144 / 2 Mb
      </div>
    </div>
  );
}

export default function App() {
  return (
    <div className="w-[1000px] h-[601px] bg-black overflow-hidden font-['Liberation_Sans',sans-serif]">
      {/* title bar */}
      <div className="h-[18px] flex items-center relative">
        <svg width="11" height="11" viewBox="0 0 11 11" className="ml-[5px] -mt-[3px]">
          <rect width="11" height="11" rx="1" fill="#e8202c" />
          <circle cx="5.5" cy="5.5" r="3" fill="none" stroke="#fff" strokeWidth="1.6" />
        </svg>
        <div className="flex-1 text-center text-[9.5px] text-[#333] -mt-[2px] pr-[5px]">25125674 - Tickmill-Demo: Демо-счет - Hedge - Tickmill Ltd - [EURUSD,H1]</div>
        <div className="w-[8px] h-px bg-[#3c3c3c] mr-[8px] -mt-[4px]" />
        <div className="w-[8px] h-[6px] border border-[#3c3c3c] mr-[9px] -mt-[7px]" />
        <div className="w-[27px] h-[12px] bg-[#c75050] text-white text-[9px] leading-[12px] text-center mr-[3px] -mt-[6px] font-bold">×</div>
      </div>
      <div className="ml-[5px] mr-[3px] h-[578px] bg-[#f0f0f0] flex flex-col">
        {/* menu */}
        <div className="h-[13px] flex items-center text-[7.2px] text-[#333] bg-[#f5f5f5] relative pl-[4px] shrink-0">
          <svg width="7" height="9" viewBox="0 0 7 9" fill="none" stroke="#2aa060" className="mr-[8px]">
            <path d="M1.5 0v9M5.5 0v9" />
            <rect x="0.5" y="2" width="2" height="5" fill="#fff" />
            <rect x="4.5" y="2" width="2" height="5" fill="#8fd4a8" />
          </svg>
          <span className="w-[30px]">Файл</span>
          <span className="w-[25px]">Вид</span>
          <span className="w-[38px]">Вставка</span>
          <span className="w-[42px]">Графики</span>
          <span className="w-[37px]">Сервис</span>
          <span className="w-[30px]">Окно</span>
          <span>Справка</span>
          <div className="ml-auto flex items-center gap-[7px] pr-[4px] text-[#bbb]">
            <div className="w-[5px] h-px bg-[#aaa] mt-[3px]" />
            <div className="w-[5px] h-[5px] border border-[#aaa]" />
            <span className="text-[7px] leading-none">×</span>
          </div>
        </div>
        <Toolbar />
        <div className="h-[402px] flex shrink-0">
          <div className="w-[177px] flex flex-col shrink-0">
            <MarketWatch />
            <div className="h-[2px]" />
            <Navigator />
          </div>
          <div className="w-[2px]" />
          <div className="flex-1 flex flex-col min-w-0 pt-[2px]">
            <MainChart />
            <div className="h-[14px] mt-[2px] flex items-center text-[6.5px] text-[#888] bg-[#f5f5f5]">
              {CHART_TABS.map(([t, w], i) => (
                <div key={i} className={`${w} text-center border-r border-[#bbb] h-[9px] leading-[9px] shrink-0`}>{t}</div>
              ))}
              <div className="w-[49px] h-[14px] bg-white border border-[#555] border-b-2 border-r-2 text-[#333] text-center leading-[11px] shrink-0">EURUSD,H1</div>
              <div className="ml-auto flex gap-[9px] pr-[8px] text-[#bbb] text-[8px]">
                <span>‹</span>
                <span>›</span>
              </div>
            </div>
          </div>
        </div>
        <Tester />
        <StatusBar />
      </div>
    </div>
  );
}
